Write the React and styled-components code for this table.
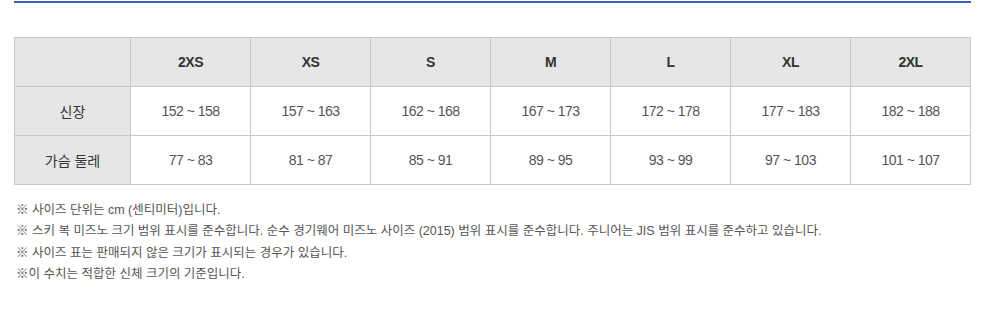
import React from "react";
import styled, { createGlobalStyle } from "styled-components";

const sizes = ["2XS", "XS", "S", "M", "L", "XL", "2XL"];

const rows = [
  {
    label: "신장",
    values: ["152 ~ 158", "157 ~ 163", "162 ~ 168", "167 ~ 173", "172 ~ 178", "177 ~ 183", "182 ~ 188"],
  },
  {
    label: "가슴 둘레",
    values: ["77 ~ 83", "81 ~ 87", "85 ~ 91", "89 ~ 95", "93 ~ 99", "97 ~ 103", "101 ~ 107"],
  },
];

const notes = [
  "※ 사이즈 단위는 cm (센티미터)입니다.",
  "※ 스키 복 미즈노 크기 범위 표시를 준수합니다. 순수 경기웨어 미즈노 사이즈 (2015) 범위 표시를 준수합니다. 주니어는 JIS 범위 표시를 준수하고 있습니다.",
  "※ 사이즈 표는 판매되지 않은 크기가 표시되는 경우가 있습니다.",
  "※이 수치는 적합한 신체 크기의 기준입니다.",
];

const SizeChart = () => {
  return (
    <>
      <GlobalStyle />
      <Wrapper>
        <TopRule />
        <Table>
          <colgroup>
            <col style={{ width: 116 }} />
            {sizes.map((s) => (
              <col key={s} style={{ width: 120 }} />
            ))}
          </colgroup>
          <thead>
            <tr>
              <HeadCell />
              {sizes.map((s) => (
                <HeadCell key={s}>{s}</HeadCell>
              ))}
            </tr>
          </thead>
          <tbody>
            {rows.map((row) => (
              <tr key={row.label}>
                <HeadCell $label>{row.label}</HeadCell>
                {row.values.map((v, i) => (
                  <Cell key={i}>{v}</Cell>
                ))}
              </tr>
            ))}
          </tbody>
        </Table>
        <Notes>
          {notes.map((n) => (
            <li key={n}>{n}</li>
          ))}
        </Notes>
      </Wrapper>
    </>
  );
};

const GlobalStyle = createGlobalStyle`
  body {
    margin: 0;
    background: #fff;
    font-family: "Liberation Sans", "Noto Sans CJK KR", sans-serif;
  }
`;

const Wrapper = styled.div`
  width: 957px;
  padding: 1px 0 0 14px;
`;

const TopRule = styled.div`
  height: 2px;
  background: #3b5fbf;
`;

const Table = styled.table`
  margin-top: 34px;
  width: 957px;
  table-layout: fixed;
  border-collapse: collapse;
  border: 1px solid #c9c9c9;
`;

const HeadCell = styled.th`
  height: 48px;
  padding: 0;
  background: #e6e6e6;
  border: 1px solid #c9c9c9;
  color: #333;
  font-size: 14px;
  letter-spacing: ${(p) => (p.$label ? "0" : "-0.5px")};
  font-weight: ${(p) => (p.$label ? "normal" : "bold")};
  text-align: center;
  vertical-align: middle;
`;

const Cell = styled.td`
  height: 48px;
  padding: 0;
  background: #fff;
  border: 1px solid #c9c9c9;
  color: #555;
  font-size: 14px;
  letter-spacing: -0.5px;
  text-align: center;
  vertical-align: middle;
`;

const Notes = styled.ul`
  list-style: none;
  margin: 15px 0 0;
  padding: 0 0 0 2px;
  color: #555;
  font-size: 12.5px;
  line-height: 21.3px;
`;

export default SizeChart;
